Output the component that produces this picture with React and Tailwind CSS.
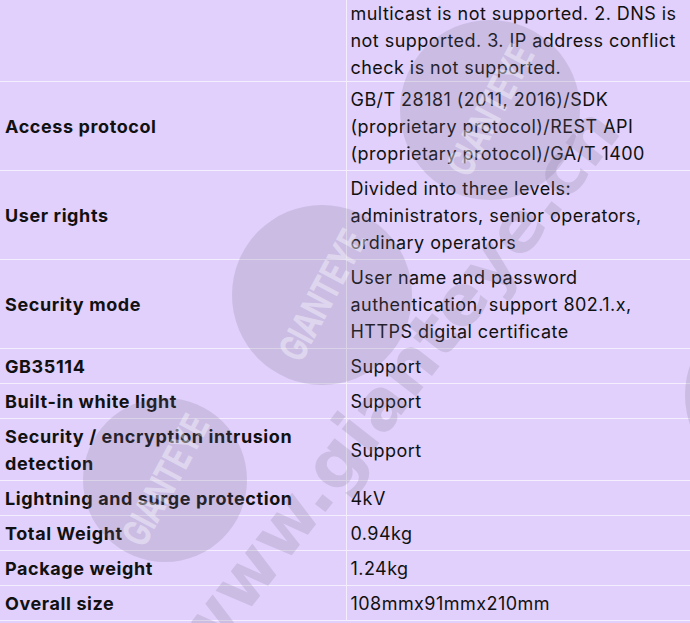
import React from 'react';

const rows = [
  { label: '', value: 'multicast is not supported. 2. DNS is not supported. 3. IP address conflict check is not supported.', first: true },
  { label: 'Access protocol', value: 'GB/T 28181 (2011, 2016)/SDK (proprietary protocol)/REST API (proprietary protocol)/GA/T 1400' },
  { label: 'User rights', value: 'Divided into three levels: administrators, senior operators, ordinary operators' },
  { label: 'Security mode', value: 'User name and password authentication, support 802.1.x, HTTPS digital certificate' },
  { label: 'GB35114', value: 'Support' },
  { label: 'Built-in white light', value: 'Support' },
  { label: 'Security / encryption intrusion detection', value: 'Support' },
  { label: 'Lightning and surge protection', value: '4kV' },
  { label: 'Total Weight', value: '0.94kg' },
  { label: 'Package weight', value: '1.24kg' },
  { label: 'Overall size', value: '108mmx91mmx210mm' },
];

function Badge({ x, y, r }) {
  return (
    <div
      className="absolute rounded-full bg-[#7a6f8c]/20 flex items-center justify-center"
      style={{ left: x - r, top: y - r, width: r * 2, height: r * 2 }}
    >
      <span className="-rotate-[62deg] text-[38px] font-bold tracking-tight text-white/40 scale-x-75">GIANTEYE</span>
    </div>
  );
}

export default function App() {
  return (
    <div className="relative w-[690px] h-[623px] overflow-hidden bg-[#e0d0fb] text-[#111] font-['Inter',sans-serif] text-[18px] leading-[27px] tracking-[0.45px]">
      <table className="w-full border-collapse">
        <tbody>
          {rows.map((r, i) => (
            <tr key={i} className="border-b-[1.5px] border-[#f4eeff]">
              <td className={`w-[346px] align-middle pl-[5px] pr-2 font-bold text-[18px] tracking-[0.6px] border-r border-[#f4eeff] ${r.first ? 'h-[80px]' : 'pt-1 pb-[3px]'}`}>
                {r.label}
              </td>
              <td className={`align-middle pl-[4px] pr-1 ${r.first ? 'h-[80px]' : 'pt-1 pb-[3px]'}`}>{r.value}</td>
            </tr>
          ))}
        </tbody>
      </table>

      <div className="pointer-events-none absolute inset-0">
        <Badge x={490} y={110} r={90} />
        <Badge x={322} y={295} r={90} />
        <Badge x={165} y={480} r={82} />
        <Badge x={775} y={395} r={90} />
        <div className="absolute left-[395px] top-[385px] -translate-x-1/2 -translate-y-1/2 -rotate-[52deg] whitespace-nowrap text-[70px] font-bold tracking-normal text-[#7a6f8c]/20 font-['DejaVu_Sans',sans-serif]">
          www.gianteye.cn
        </div>
      </div>
    </div>
  );
}
